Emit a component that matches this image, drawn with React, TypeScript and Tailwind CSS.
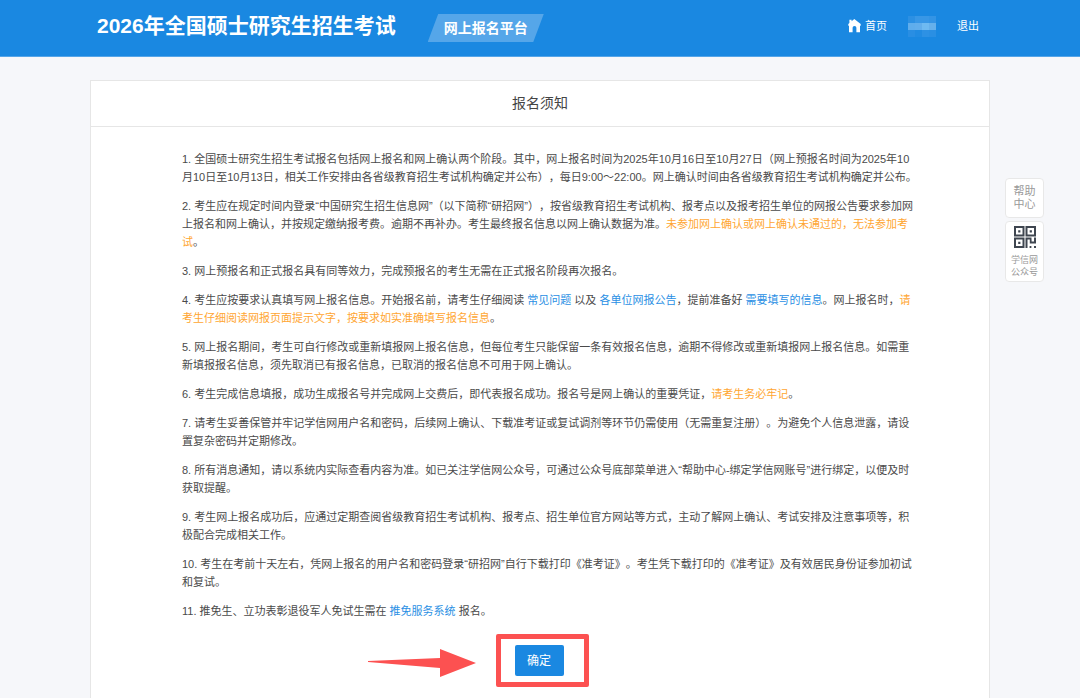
import React from 'react';

const Notice: React.FC<{ children: React.ReactNode }> = ({ children }) => (
  <span className="text-[#ffa632]">{children}</span>
);

const TextLink: React.FC<{ children: React.ReactNode }> = ({ children }) => (
  <a href="#" className="text-[#2a8fe4] hover:underline">
    {children}
  </a>
);

const notices: React.ReactNode[] = [
  '1. 全国硕士研究生招生考试报名包括网上报名和网上确认两个阶段。其中，网上报名时间为2025年10月16日至10月27日（网上预报名时间为2025年10月10日至10月13日，相关工作安排由各省级教育招生考试机构确定并公布），每日9:00～22:00。网上确认时间由各省级教育招生考试机构确定并公布。',
  <>
    2. 考生应在规定时间内登录“中国研究生招生信息网”（以下简称“研招网”），按省级教育招生考试机构、报考点以及报考招生单位的网报公告要求参加网上报名和网上确认，并按规定缴纳报考费。逾期不再补办。考生最终报名信息以网上确认数据为准。
    <Notice>未参加网上确认或网上确认未通过的，无法参加考试</Notice>。
  </>,
  '3. 网上预报名和正式报名具有同等效力，完成预报名的考生无需在正式报名阶段再次报名。',
  <>
    4. 考生应按要求认真填写网上报名信息。开始报名前，请考生仔细阅读 <TextLink>常见问题</TextLink> 以及{' '}
    <TextLink>各单位网报公告</TextLink>，提前准备好 <TextLink>需要填写的信息</TextLink>。网上报名时，
    <Notice>请考生仔细阅读网报页面提示文字，按要求如实准确填写报名信息</Notice>。
  </>,
  '5. 网上报名期间，考生可自行修改或重新填报网上报名信息，但每位考生只能保留一条有效报名信息，逾期不得修改或重新填报网上报名信息。如需重新填报报名信息，须先取消已有报名信息，已取消的报名信息不可用于网上确认。',
  <>
    6. 考生完成信息填报，成功生成报名号并完成网上交费后，即代表报名成功。报名号是网上确认的重要凭证，
    <Notice>请考生务必牢记</Notice>。
  </>,
  '7. 请考生妥善保管并牢记学信网用户名和密码，后续网上确认、下载准考证或复试调剂等环节仍需使用（无需重复注册）。为避免个人信息泄露，请设置复杂密码并定期修改。',
  '8. 所有消息通知，请以系统内实际查看内容为准。如已关注学信网公众号，可通过公众号底部菜单进入“帮助中心-绑定学信网账号”进行绑定，以便及时获取提醒。',
  '9. 考生网上报名成功后，应通过定期查阅省级教育招生考试机构、报考点、招生单位官方网站等方式，主动了解网上确认、考试安排及注意事项等，积极配合完成相关工作。',
  '10. 考生在考前十天左右，凭网上报名的用户名和密码登录“研招网”自行下载打印《准考证》。考生凭下载打印的《准考证》及有效居民身份证参加初试和复试。',
  <>
    11. 推免生、立功表彰退役军人免试生需在 <TextLink>推免服务系统</TextLink> 报名。
  </>,
];

const HomeIcon = () => (
  <svg viewBox="0 0 13 14" className="h-[14px] w-[13px]" fill="currentColor" aria-hidden="true">
    <path d="M1.4 0.8h2.2v1.4L6.3 0 12.7 5v1.8h-0.7V13.2H8.4V8.8a1.9 1.9 0 0 0-3.8 0v4.4H1V6.8H0.3V5l1.1-0.9z" />
  </svg>
);

const QrIcon = () => (
  <svg viewBox="0 0 22 22" className="size-[22px]" fill="none" aria-hidden="true">
    <path d="M1 1h8.5v8.5H1zM12.5 1H21v8.5h-8.5zM1 12.5h8.5V21H1z" stroke="#3f4650" strokeWidth="2" />
    <path
      d="M4.2 4.2h2.2v2.2H4.2zM15.7 4.2h2.2v2.2h-2.2zM4.2 15.7h2.2v2.2H4.2zM11.5 11.5h2V22h-2zM13.5 11.5h4v2h-4zM15.8 13.5h1.8v4h-1.8zM20 11.5h2v6h-2zM17.5 15.6h2.5v1.9h-2.5zM15.6 20h1.8v2h-1.8zM20 20h2v2h-2z"
      fill="#3f4650"
    />
  </svg>
);

// blurred-out user name in the header
const nameBlocks = [
  'bg-[#2c90e3]', 'bg-[#3897e6]', 'bg-[#3897e6]', 'bg-[#3394e5]',
  'bg-[#5fadec]', 'bg-[#62aeec]', 'bg-[#6fbaf1]', 'bg-[#65b0eb]',
  'bg-[#298ee3]', 'bg-[#218be2]', 'bg-[#2d91e4]', 'bg-[#2a8fe3]',
];

const Header = () => (
  <header className="h-[57px] border-b border-[#55a5e8] bg-[#1a88e1] text-white">
    <div className="mx-auto flex h-full w-5/6 items-center pr-[11px] pl-[7px]">
      <h1 className="pb-1 text-[21px] leading-7 font-bold whitespace-nowrap">2026年全国硕士研究生招生考试</h1>
      <div className="ml-8 flex h-[28px] w-[116px] items-center justify-center bg-[#55a6e9] text-sm font-bold [clip-path:polygon(9%_0,100%_0,91%_100%,0_100%)]">
        网上报名平台
      </div>
      <nav className="ml-auto flex items-center gap-[21px] pb-1 text-[11px] leading-4">
        <a href="#" className="flex items-center gap-1">
          <HomeIcon />
          首页
        </a>
        <span className="grid w-7 grid-cols-4">
          {nameBlocks.map((color, i) => (
            <span key={i} className={`h-[7px] ${color}`} />
          ))}
        </span>
        <a href="#">退出</a>
      </nav>
    </div>
  </header>
);

const SideBar = () => (
  <aside className="fixed top-[178px] right-[36px] flex w-[39px] flex-col gap-[3px] text-center text-[#999]">
    <a href="#" className="rounded-sm border border-[#e8e8e8] bg-white py-[6px] text-[11px] leading-[13px]">
      帮助
      <br />
      中心
    </a>
    <a
      href="#"
      className="flex flex-col items-center rounded-sm border border-[#e8e8e8] bg-white pt-1 pb-[3px] text-[9px] leading-3"
    >
      <QrIcon />
      <span className="mt-[6px]">
        学信网
        <br />
        公众号
      </span>
    </a>
  </aside>
);

const App: React.FC = () => {
  return (
    <div className="min-h-screen bg-[#f6f7fa] font-['Liberation_Sans','Noto_Sans_CJK_SC',sans-serif] text-[#4a4a4a] [text-spacing-trim:space-all]">
      <Header />
      <main className="mx-auto mt-[23px] w-5/6 border border-b-0 border-[#e6e6e6] bg-white">
        <h2 className="border-b border-[#e6e6e6] py-3 text-center text-sm leading-[21px] text-[#444]">报名须知</h2>
        <div className="flex flex-col gap-[11px] pt-[23px] pr-[71px] pl-[91px] text-[11px] leading-[18px]">
          {notices.map((item, i) => (
            <p key={i}>{item}</p>
          ))}
        </div>
        <div className="flex justify-center pt-[14px] pb-[11px] pl-1">
          <div className="relative flex rounded-xs border-[5px] border-[#fc5151] py-[6px] pr-5 pl-[14px]">
            <svg
              viewBox="0 0 109 28"
              className="absolute top-[10px] right-full mr-6 h-[28px] w-[109px]"
              fill="#fc5151"
              aria-hidden="true"
            >
              <path d="M0 12 72 9V0L108 14 72 28V19L0 13z" />
            </svg>
            <button type="button" className="h-[31px] w-[49px] rounded-xs bg-[#1a88e1] text-xs text-white">
              确定
            </button>
          </div>
        </div>
      </main>
      <SideBar />
    </div>
  );
};

export default App;
